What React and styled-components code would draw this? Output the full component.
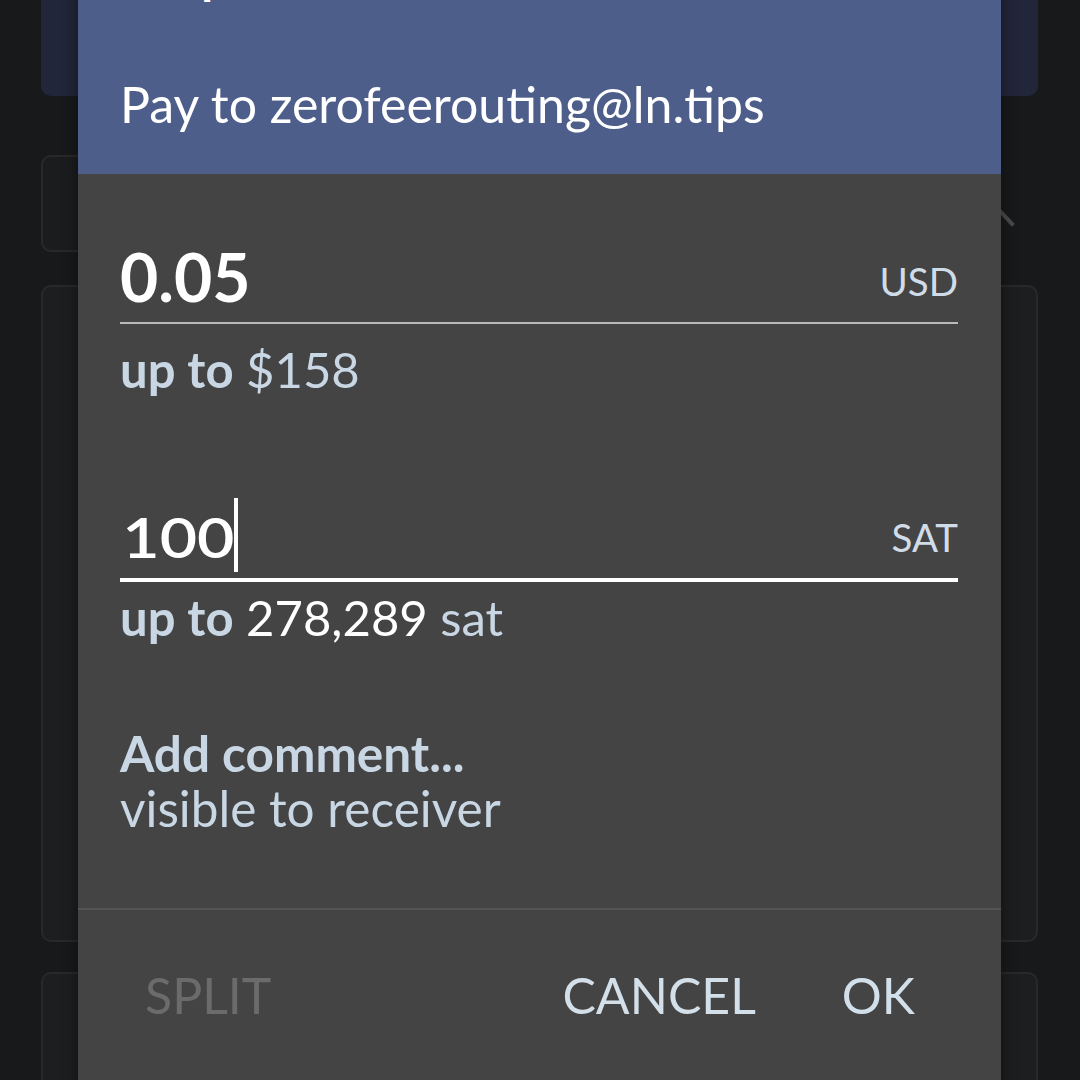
import React from "react";
import styled, { createGlobalStyle } from "styled-components";

const GlobalStyle = createGlobalStyle`
  html, body { margin: 0; padding: 0; background: #18191b; }
  body { font-family: Lato, "Open Sans", sans-serif; }
  * { box-sizing: border-box; }
`;

const Screen = styled.div`
  position: relative;
  width: 1080px;
  height: 1080px;
  overflow: hidden;
  background: #18191b;
`;

const Content = styled.div`
  display: flex;
  flex-direction: column;
  padding: 0 42px 0 41px;
`;

const TopCard = styled.div`
  height: 196px;
  margin-top: -100px;
  border-radius: 10px;
  background: #22263a;
`;

const ToggleRow = styled.div`
  display: flex;
  align-items: center;
  justify-content: space-between;
  height: 97px;
  margin-top: 59px;
`;

const ToggleBox = styled.div`
  width: 900px;
  height: 100%;
  border: 2px solid #29292b;
  border-radius: 10px;
  background: #1b1c1e;
`;

const Chevron = styled.svg`
  width: 34px;
  height: 22px;
  margin: 26px 22px 0 0;
`;

const Card = styled.div`
  height: ${(p) => p.$h}px;
  margin-top: ${(p) => p.$mt}px;
  border: 2px solid #29292b;
  border-radius: 10px;
  background: #1d1e20;
`;

const Dialog = styled.div`
  position: absolute;
  left: 78px;
  top: -53px;
  width: 923px;
  height: 1200px;
  background: #444444;
  box-shadow: 0 0 16px rgba(0, 0, 0, 0.45);
  display: flex;
  flex-direction: column;
`;

const DialogHeader = styled.div`
  background: #4e5e8a;
  padding: 0 42px 40px;
  color: #ffffff;
`;

const Title = styled.div`
  font-size: 48px;
  font-weight: 700;
  line-height: 1.2;
`;

const Subtitle = styled.div`
  margin-top: 69px;
  font-size: 50px;
  font-weight: 400;
  line-height: 1.2;
`;

const Body = styled.div`
  padding: 63px 43px 72px 42px;
  display: flex;
  flex-direction: column;
`;

const FieldRow = styled.div`
  display: flex;
  align-items: flex-end;
  justify-content: space-between;
  margin-top: ${(p) => p.$mt || 0}px;
  padding-bottom: ${(p) => (p.$focused ? 8 : 6)}px;
  border-bottom: ${(p) => (p.$focused ? "4px solid #ffffff" : "2px solid #b9b9b9")};
`;

const Value = styled.div`
  position: relative;
  color: #ffffff;
  font-size: ${(p) => p.$size}px;
  font-weight: ${(p) => p.$weight};
  line-height: 1.2;
`;

const WideText = styled.span`
  display: inline-block;
  transform: scaleX(1.15);
  transform-origin: left center;
  margin-right: 15px;
  padding-left: 2px;
`;

const Caret = styled.span`
  position: absolute;
  left: 100%;
  top: -5px;
  width: 4px;
  height: 74px;
  background: #ffffff;
`;

const Unit = styled.div`
  color: #d0dce8;
  font-size: 38.5px;
  line-height: 1.2;
  margin-bottom: ${(p) => p.$mb}px;
`;

const Helper = styled.div`
  margin-top: ${(p) => p.$mt}px;
  font-size: 49px;
  line-height: 1.2;
  color: #c9d7e5;
`;

const Strong = styled.span`
  font-weight: 700;
`;

const White = styled.span`
  color: #ffffff;
`;

const Comment = styled.div`
  margin-top: 78.6px;
  font-size: 49.5px;
  line-height: 55px;
  color: #c9d7e5;
`;

const CommentTitle = styled.div`
  font-weight: 700;
`;

const Actions = styled.div`
  display: flex;
  align-items: center;
  border-top: 2px solid #545454;
  padding: 55px 43px 0 24px;
`;

const ActionButton = styled.div`
  padding: 0 43px;
  font-size: 50px;
  line-height: 1.2;
  color: ${(p) => (p.$disabled ? "#6b6b6b" : "#d3dfe9")};
  margin-right: ${(p) => (p.$push ? "auto" : "0")};
`;

export default function App() {
  return (
    <Screen>
      <GlobalStyle />
      <Content>
        <TopCard />
        <ToggleRow>
          <ToggleBox />
          <Chevron viewBox="0 0 34 22">
            <path d="M4 18 L17 4 L30 18" fill="none" stroke="#4a4a4a" strokeWidth="4" strokeLinecap="square" />
          </Chevron>
        </ToggleRow>
        <Card $mt={33} $h={657} />
        <Card $mt={30} $h={200} />
      </Content>

      <Dialog>
        <DialogHeader>
          <Title>ln.tips</Title>
          <Subtitle>Pay to zerofeerouting@ln.tips</Subtitle>
        </DialogHeader>
        <Body>
          <FieldRow>
            <Value $size={66} $weight={700}>0.05</Value>
            <Unit $mb={12}>USD</Unit>
          </FieldRow>
          <Helper $mt={16}>
            <Strong>up to</Strong> $158
          </Helper>

          <FieldRow $mt={104} $focused>
            <Value $size={56} $weight={600}>
              <WideText>100</WideText>
              <Caret />
            </Value>
            <Unit $mb={10}>SAT</Unit>
          </FieldRow>
          <Helper $mt={6.6}>
            <Strong>up to</Strong> <White>278,289</White> sat
          </Helper>

          <Comment>
            <CommentTitle>Add comment...</CommentTitle>
            <div>visible to receiver</div>
          </Comment>
        </Body>
        <Actions>
          <ActionButton $disabled $push>SPLIT</ActionButton>
          <ActionButton>CANCEL</ActionButton>
          <ActionButton>OK</ActionButton>
        </Actions>
      </Dialog>
    </Screen>
  );
}
